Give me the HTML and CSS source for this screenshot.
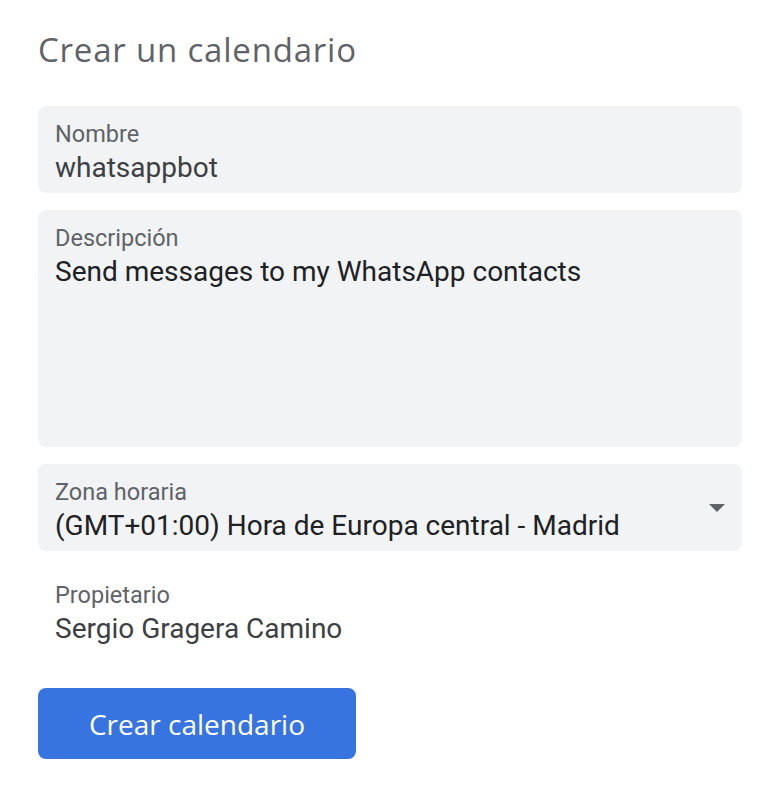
FILE: index.html
```html
<!DOCTYPE html>
<html lang="es">
<head>
<meta charset="utf-8">
<link rel="stylesheet" href="styles.css">
<title>Crear un calendario</title>
</head>
<body>
<main class="page">
  <h1 class="title">Crear un calendario</h1>
  <div class="field">
    <div class="label">Nombre</div>
    <div class="value">whatsappbot</div>
  </div>
  <div class="field field-area">
    <div class="label">Descripción</div>
    <div class="value value-dark">Send messages to my WhatsApp contacts</div>
  </div>
  <div class="field field-select">
    <div class="select-text">
      <div class="label">Zona horaria</div>
      <div class="value value-dark">(GMT+01:00) Hora de Europa central - Madrid</div>
    </div>
    <svg class="arrow" width="16" height="8" viewBox="0 0 16 8"><path d="M0 0h16L8 8z" fill="#5f6368"/></svg>
  </div>
  <div class="owner">
    <div class="label">Propietario</div>
    <div class="value">Sergio Gragera Camino</div>
  </div>
  <button class="btn">Crear calendario</button>
</main>
</body>
</html>
```

FILE: styles.css
```css
* { box-sizing: border-box; }
html, body { margin: 0; padding: 0; background: #fff; }
body { font-family: Roboto, "Noto Sans", sans-serif; }
.page {
  padding: 30px 34px 0 38px;
  display: flex;
  flex-direction: column;
  align-items: stretch;
}
.title {
  margin: 0 0 36px 0;
  font-family: "Open Sans", Roboto, sans-serif;
  font-weight: 400;
  font-size: 33px;
  line-height: 40px;
  color: #5f6368;
  letter-spacing: 0.8px;
}
.field {
  background: #f1f3f4;
  border-radius: 8px;
  padding: 14px 17px 0 17px;
  height: 87px;
  margin-bottom: 17px;
}
.field-area { height: 237px; }
.field-select {
  display: flex;
  align-items: flex-start;
  justify-content: space-between;
}
.arrow { margin-top: 26px; margin-right: 0; flex: none; }
.label {
  font-size: 23.5px;
  line-height: 28px;
  color: #5f6368;
}
.value {
  margin-top: 2px;
  font-size: 28px;
  line-height: 36px;
  color: #3c4043;
}
.value-dark { color: #202124; }
.owner { margin-top: 13px; padding: 0 17px; }
.btn {
  margin-top: 41px;
  align-self: flex-start;
  width: 318px;
  height: 71px;
  border: 0;
  border-radius: 8px;
  background: #3874df;
  color: #fff;
  font-family: "Open Sans", Roboto, sans-serif;
  font-weight: 500;
  font-size: 28px;
  padding: 0;
}
```
